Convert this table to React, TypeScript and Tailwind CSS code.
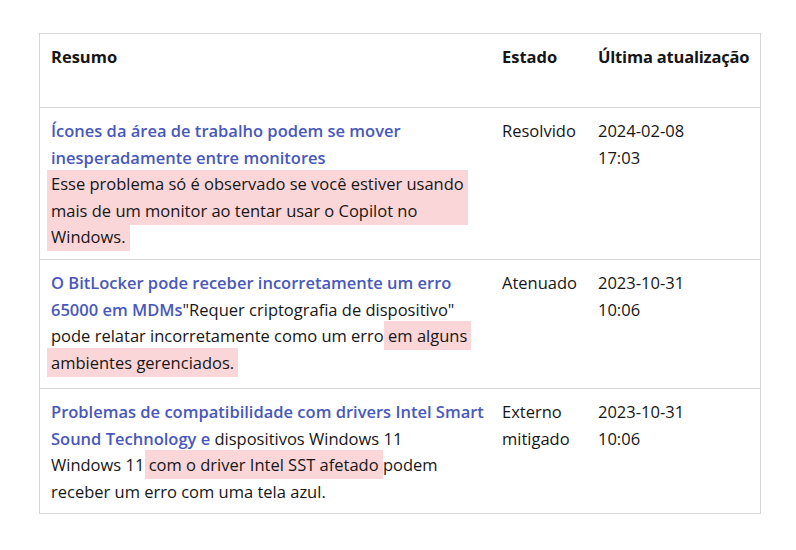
const link = "font-semibold text-[#4858bd]";
const hl = "bg-[#fbd6d8] px-1 py-[3px]";

function Row({
  summary,
  state,
  updated,
  height,
}: {
  summary: React.ReactNode;
  state: React.ReactNode;
  updated: React.ReactNode;
  height: string;
}) {
  return (
    <div className={`grid grid-cols-[450px_96px_174px] border-t border-[#d6d6d6] ${height}`}>
      <div className="pl-[11px] pt-[10px]">{summary}</div>
      <div className="pl-3 pt-[10px]">{state}</div>
      <div className="pl-3 pt-[10px]">{updated}</div>
    </div>
  );
}

export default function App() {
  return (
    <div
      className="min-h-[550px] bg-white pl-[39px] pt-[33px] text-[16.5px] leading-[26.5px] text-[#161616]"
      style={{ fontFamily: '"Segoe UI", "Open Sans", "Noto Sans", sans-serif' }}
    >
      <div className="w-[722px] border border-[#d6d6d6]">
        <div className="grid h-[73px] grid-cols-[450px_96px_174px] font-bold">
          <div className="pl-[11px] pt-[10px]">Resumo</div>
          <div className="pl-3 pt-[10px]">Estado</div>
          <div className="pl-3 pt-[10px] tracking-[-0.2px]">Última atualização</div>
        </div>

        <Row
          height="h-[152px]"
          summary={
            <>
              <div className={link}>Ícones da área de trabalho podem se mover</div>
              <div className={link}>inesperadamente entre monitores</div>
              <div className="-ml-1 w-fit bg-[#fbd6d8] px-1 py-[1px] -my-[1px]">
                <div>Esse problema só é observado se você estiver usando</div>
                <div>mais de um monitor ao tentar usar o Copilot no</div>
              </div>
              <div className="-ml-1">
                <span className={hl}>Windows.</span>
              </div>
            </>
          }
          state="Resolvido"
          updated={
            <>
              <div>2024-02-08</div>
              <div>17:03</div>
            </>
          }
        />

        <Row
          height="h-[129px]"
          summary={
            <>
              <div className={link}>O BitLocker pode receber incorretamente um erro</div>
              <div>
                <span className={link}>65000 em MDMs</span>"Requer criptografia de dispositivo"
              </div>
              <div>
                pode relatar incorretamente como um erro <span className={`-ml-1 ${hl}`}>em alguns</span>
              </div>
              <div className="-ml-1">
                <span className={hl}>ambientes gerenciados.</span>
              </div>
            </>
          }
          state="Atenuado"
          updated={
            <>
              <div>2023-10-31</div>
              <div>10:06</div>
            </>
          }
        />

        <Row
          height="h-[125px]"
          summary={
            <>
              <div className={link}>Problemas de compatibilidade com drivers Intel Smart</div>
              <div>
                <span className={link}>Sound Technology e</span> dispositivos Windows 11
              </div>
              <div>
                Windows 11 <span className={`-mx-1 ${hl}`}>com o driver Intel SST afetado</span> podem
              </div>
              <div>receber um erro com uma tela azul.</div>
            </>
          }
          state={
            <>
              <div>Externo</div>
              <div>mitigado</div>
            </>
          }
          updated={
            <>
              <div>2023-10-31</div>
              <div>10:06</div>
            </>
          }
        />
      </div>
    </div>
  );
}
